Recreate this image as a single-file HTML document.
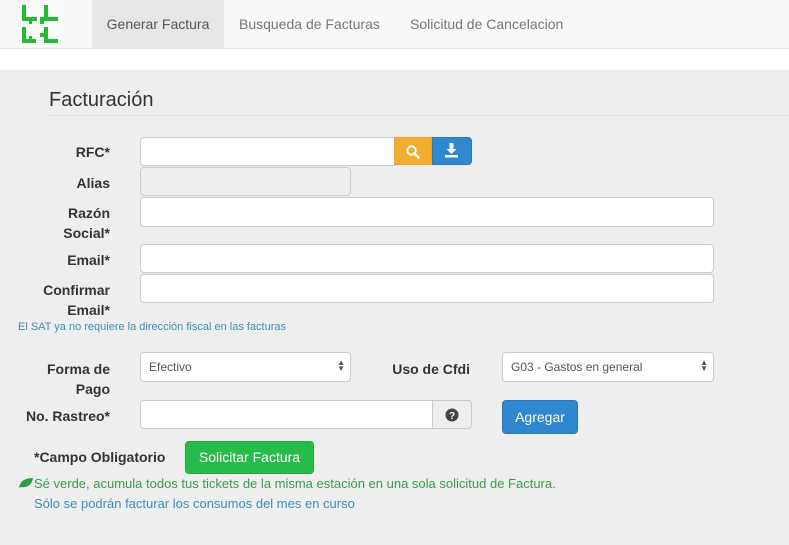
<!DOCTYPE html>
<html><head><meta charset="utf-8"><style>
*{box-sizing:border-box;margin:0;padding:0}
body{width:789px;height:545px;overflow:hidden;background:#fff;font-family:"Liberation Sans",Arial,sans-serif;position:relative;color:#333}
.nav{position:absolute;left:0;top:0;width:789px;height:49px;background:#f8f8f8;border-bottom:1px solid #e7e7e7}
.nav a{position:absolute;top:0;height:48px;line-height:48px;font-size:14px;color:#777}
.main{position:absolute;left:0;top:70px;width:789px;height:475px;background:#eeeeee}
.abs{position:absolute}
.lbl{position:absolute;font-weight:bold;font-size:14px;text-align:right;color:#333;line-height:20px}
.in{position:absolute;background:#fff;border:1px solid #ccc;border-radius:4px}
.sel{font-size:12px;color:#555;padding:7px 8px}
.arr{position:absolute;right:5px;top:7px;font-size:8px;line-height:6px;color:#555}
</style></head><body>
<div class="nav">
<div class="abs" style="left:18px;top:2px;width:44px;height:44px;background:#fafafa"></div>
<svg class="abs" style="left:0;top:0" width="70" height="49" viewBox="0 0 70 49" fill="#22bb33">
<rect x="22" y="5" width="4" height="15"/><rect x="22" y="17" width="15" height="4"/><rect x="29" y="21" width="3" height="3"/>
<rect x="44" y="5" width="4" height="15"/><rect x="40" y="17" width="18" height="4"/><rect x="40" y="21" width="4" height="3"/>
<rect x="22" y="27" width="4" height="16"/><rect x="22" y="39" width="14" height="4"/><rect x="29" y="36" width="3" height="3"/>
<rect x="44" y="27" width="4" height="16"/><rect x="44" y="39" width="14" height="4"/><rect x="40" y="33" width="4" height="4"/>
</svg>
<a style="left:92px;width:132px;background:#e7e7e7;color:#555;text-align:center">Generar Factura</a>
<a style="left:239px">Busqueda de Facturas</a>
<a style="left:410px">Solicitud de Cancelacion</a>
</div>
<div class="main"></div>
<div class="abs" style="left:49px;top:89px;font-size:20px;color:#333">Facturación</div>
<div class="abs" style="left:49px;top:115px;width:740px;height:1px;background:#e2e2e2"></div>

<div class="lbl" style="right:679px;top:142px">RFC*</div>
<div class="in" style="left:140px;top:137px;width:256px;height:29px;border-radius:4px 0 0 4px"></div>
<div class="abs" style="left:394px;top:137px;width:38px;height:28px;background:#f0ad2e;border:1px solid #eea236"></div>
<svg class="abs" style="left:405px;top:144px" width="16" height="16" viewBox="0 0 16 16"><circle cx="6.5" cy="6.5" r="4.2" fill="none" stroke="#fff" stroke-width="2"/><path d="M9.5 9.5l4 4" stroke="#fff" stroke-width="2.5" stroke-linecap="round"/></svg>
<div class="abs" style="left:432px;top:137px;width:40px;height:28px;background:#2f87d0;border:1px solid #2a78bb;border-radius:0 4px 4px 0"></div>
<svg class="abs" style="left:444px;top:143px" width="15" height="15" viewBox="0 0 15 15" fill="#fff"><rect x="5.5" y="0" width="4" height="6"/><path d="M2.5 6h10l-5 5z"/><rect x="1" y="12" width="13" height="2.5"/></svg>

<div class="lbl" style="right:679px;top:173px">Alias</div>
<div class="in" style="left:140px;top:167px;width:211px;height:29px;background:#eee"></div>

<div class="lbl" style="right:679px;top:203px">Razón<br>Social*</div>
<div class="in" style="left:140px;top:197px;width:574px;height:30px"></div>

<div class="lbl" style="right:679px;top:250px">Email*</div>
<div class="in" style="left:140px;top:244px;width:574px;height:29px"></div>

<div class="lbl" style="right:679px;top:280px">Confirmar<br>Email*</div>
<div class="in" style="left:140px;top:274px;width:574px;height:29px"></div>

<div class="abs" style="left:18px;top:321px;font-size:11px;color:#3a8fb7">El SAT ya no requiere la dirección fiscal en las facturas</div>

<div class="lbl" style="right:679px;top:359px">Forma de<br>Pago</div>
<div class="in sel" style="left:140px;top:352px;width:211px;height:30px">Efectivo<div class="arr">▲<br>▼</div></div>
<div class="lbl" style="right:319px;top:359px">Uso de Cfdi</div>
<div class="in sel" style="left:502px;top:352px;width:212px;height:30px">G03 - Gastos en general<div class="arr">▲<br>▼</div></div>

<div class="lbl" style="right:679px;top:406px">No. Rastreo*</div>
<div class="in" style="left:140px;top:400px;width:293px;height:29px;border-radius:4px 0 0 4px"></div>
<div class="abs" style="left:432px;top:400px;width:40px;height:29px;background:#eee;border:1px solid #ccc;border-radius:0 4px 4px 0"></div>
<svg class="abs" style="left:445px;top:408px" width="14" height="14" viewBox="0 0 14 14"><circle cx="7" cy="7" r="6.5" fill="#444"/><text x="7" y="11" font-size="10" font-weight="bold" text-anchor="middle" fill="#fff" font-family="Liberation Sans">?</text></svg>
<div class="abs" style="left:502px;top:400px;width:76px;height:34px;background:#2f87d0;border:1px solid #2a78bb;border-radius:4px;color:#fff;font-size:14px;text-align:center;line-height:32px">Agregar</div>

<div class="lbl" style="left:34px;top:447px;text-align:left">*Campo Obligatorio</div>
<div class="abs" style="left:185px;top:441px;width:129px;height:33px;background:#27bb4a;border:1px solid #22a842;border-radius:4px;color:#fff;font-size:14px;text-align:center;line-height:31px">Solicitar Factura</div>

<svg class="abs" style="left:18px;top:477px" width="16" height="12" viewBox="0 0 16 12"><path d="M1 11C2 4 7 1 15 1 14 8 9 11 3 10z" fill="#2aa044"/></svg>
<div class="abs" style="left:34px;top:476px;font-size:13px;color:#3c9a4a">Sé verde, acumula todos tus tickets de la misma estación en una sola solicitud de Factura.</div>
<div class="abs" style="left:34px;top:496px;font-size:13px;color:#3a8fb7">Sólo se podrán facturar los consumos del mes en curso</div>
</body></html>
